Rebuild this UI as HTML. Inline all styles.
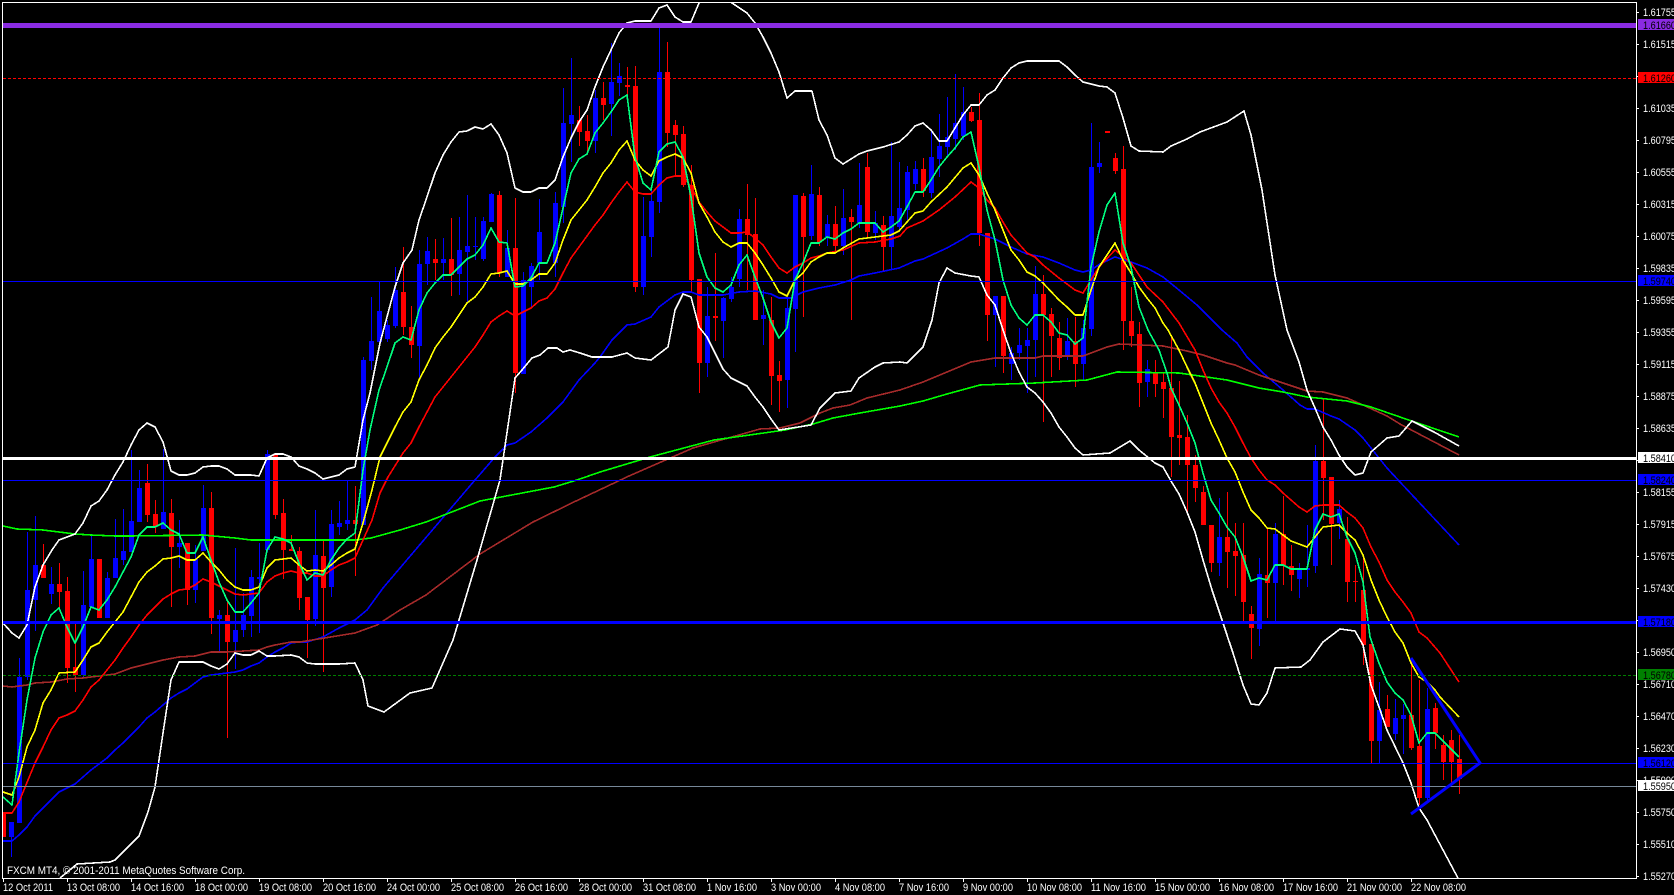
<!DOCTYPE html>
<html lang="en"><head><meta charset="utf-8"><title>FXCM MT4 chart</title>
<style>
html,body{margin:0;padding:0;background:#000;width:1674px;height:895px;overflow:hidden}
svg{display:block}
text{font-family:"Liberation Sans",sans-serif;font-size:11px;fill:#fff}
.k text,text.k{fill:#000}
.m polyline{fill:none;stroke-width:1.6;shape-rendering:crispEdges;stroke-linejoin:round}
.c path{fill:none;shape-rendering:crispEdges}
</style></head><body>
<svg width="1674" height="895" viewBox="0 0 1674 895" xmlns="http://www.w3.org/2000/svg">
<defs><clipPath id="p"><rect x="3" y="3" width="1633" height="875"/></clipPath></defs>
<rect width="1674" height="895" fill="#000"/>
<g clip-path="url(#p)">
<g class="c">
<path stroke="#0000ff" stroke-width="1" d="M11.5 822V857M19.5 658V823M27.5 532V680M35.5 516V631M51.5 567V604M83.5 571V677M91.5 535V607M107.5 572V618M115.5 519V578M123.5 509V565M131.5 450V552M139.5 470V522M163.5 449V529M179.5 520V568M195.5 545V603M203.5 485V551M219.5 610V651M235.5 548V669M243.5 593V637M251.5 570V637M259.5 543V633M267.5 450V552M315.5 510V626M331.5 510V597M339.5 501V535M347.5 481V530M363.5 357V525M371.5 297V370M379.5 282V342M387.5 320V342M395.5 267V328M419.5 250V380M427.5 237V285M443.5 238V280M459.5 217V295M467.5 195V303M475.5 217V260M483.5 217V261M491.5 193V222M507.5 230V277M523.5 272V374M531.5 263V307M539.5 199V280M555.5 192V277M563.5 88V223M571.5 58V162M595.5 90V153M611.5 43V136M619.5 63V96M643.5 197V295M651.5 190V257M659.5 28V213M707.5 287V377M723.5 297V358M731.5 277V302M739.5 209V287M763.5 290V345M787.5 297V408M795.5 195V352M811.5 165V240M827.5 215V246M843.5 189V255M859.5 163V228M875.5 211V240M891.5 142V270M899.5 162V230M907.5 166V220M915.5 161V190M931.5 130V198M939.5 114V177M947.5 97V155M955.5 74V150M963.5 87V140M995.5 296V367M1011.5 347V380M1019.5 328V360M1027.5 328V393M1035.5 266V377M1067.5 318V360M1083.5 320V380M1091.5 123V336M1099.5 142V173M1147.5 360V397M1219.5 498V576M1259.5 558V646M1275.5 523V622M1299.5 563V598M1307.5 525V587M1315.5 445V573M1339.5 500V539M1379.5 682V763M1395.5 699V740M1403.5 704V754M1427.5 688V800"/>
<path stroke="#0000ff" stroke-width="5" d="M11.5 822V837M19.5 677V823M27.5 590V677M35.5 565V600M51.5 584V594M83.5 605V675M91.5 559V607M107.5 578V618M115.5 558V578M123.5 551V560M131.5 521V552M139.5 488V522M163.5 512V529M179.5 543V547M195.5 559V590M203.5 508V551M219.5 615V619M235.5 630V642M243.5 615V630M251.5 577V616M259.5 577V579M267.5 454V550M315.5 555V619M331.5 524V587M339.5 523V527M347.5 520V524M363.5 360V525M371.5 341V361M379.5 311V342M387.5 325V339M395.5 290V326M419.5 264V346M427.5 251V264M443.5 259V263M459.5 250V274M467.5 246V252M475.5 246V247M483.5 221V259M491.5 194V222M507.5 248V277M523.5 280V374M531.5 266V287M539.5 232V263M555.5 203V263M563.5 123V207M571.5 115V124M595.5 98V141M611.5 82V104M619.5 76V83M643.5 236V287M651.5 201V237M659.5 72V202M707.5 316V363M723.5 298V321M731.5 287V299M739.5 219V279M763.5 315V319M787.5 308V380M795.5 195V309M811.5 194V236M827.5 224V237M843.5 218V246M859.5 205V223M875.5 223V233M891.5 216V247M899.5 208V227M907.5 172V210M915.5 169V184M931.5 157V193M939.5 146V159M947.5 137V147M955.5 123V139M963.5 112V136M995.5 296V315M1011.5 353V364M1019.5 345V353M1027.5 340V346M1035.5 294V340M1067.5 341V356M1083.5 328V364M1091.5 167V329M1099.5 163V167M1147.5 369V382M1219.5 537V563M1259.5 574V629M1275.5 534V583M1299.5 569V579M1307.5 568V570M1315.5 461V566M1339.5 509V523M1379.5 710V741M1395.5 718V734M1403.5 715V719M1427.5 709V798"/>
<path stroke="#ff0000" stroke-width="1" d="M43.5 544V578M59.5 563V609M67.5 577V683M75.5 624V692M99.5 559V618M147.5 464V522M155.5 500V533M171.5 499V607M187.5 543V605M211.5 492V634M227.5 600V738M275.5 455V519M283.5 499V579M291.5 535V551M299.5 547V610M307.5 597V658M323.5 540V672M355.5 486V576M403.5 247V335M411.5 306V358M435.5 239V280M451.5 218V296M499.5 191V277M515.5 198V393M579.5 106V146M587.5 115V152M603.5 82V120M627.5 67V95M635.5 66V292M667.5 42V147M675.5 120V175M683.5 126V187M691.5 165V293M699.5 279V393M715.5 253V341M747.5 184V290M755.5 198V320M771.5 297V405M779.5 361V412M803.5 193V317M819.5 187V246M835.5 206V253M851.5 209V320M867.5 153V237M883.5 216V272M923.5 158V197M971.5 107V122M979.5 93V246M987.5 233V341M1003.5 296V373M1043.5 275V422M1051.5 308V377M1059.5 322V370M1075.5 317V387M1115.5 153V174M1123.5 146V350M1131.5 287V347M1139.5 322V407M1155.5 360V397M1163.5 373V418M1171.5 337V477M1179.5 381V465M1187.5 415V515M1195.5 455V502M1203.5 486V525M1211.5 525V572M1227.5 492V588M1235.5 523V596M1243.5 523V623M1251.5 606V659M1267.5 529V618M1283.5 496V585M1291.5 545V591M1323.5 398V520M1331.5 477V565M1347.5 517V602M1355.5 565V602M1363.5 558V665M1371.5 644V763M1387.5 695V727M1411.5 660V750M1419.5 680V805M1435.5 703V749M1443.5 735V780M1451.5 730V785M1459.5 735V794"/>
<path stroke="#ff0000" stroke-width="5" d="M3.5 813V837M43.5 565V578M59.5 584V592M67.5 591V668M75.5 667V675M99.5 559V618M147.5 483V515M155.5 514V526M171.5 513V547M187.5 543V590M211.5 508V618M227.5 615V642M275.5 455V515M283.5 513V550M291.5 549V551M299.5 551V598M307.5 597V620M323.5 556V588M355.5 520V524M403.5 292V327M411.5 327V345M435.5 259V263M451.5 259V275M499.5 195V273M515.5 248V373M579.5 120V132M587.5 131V141M603.5 98V105M627.5 85V87M635.5 86V287M667.5 72V133M675.5 125V135M683.5 134V185M691.5 185V280M699.5 279V363M715.5 316V318M747.5 219V235M755.5 234V320M771.5 320V376M779.5 375V381M803.5 196V237M819.5 195V242M835.5 224V246M851.5 217V222M867.5 167V232M883.5 225V247M923.5 169V191M971.5 112V121M979.5 120V233M987.5 233V315M1003.5 296V356M1043.5 294V315M1051.5 314V336M1059.5 338V358M1075.5 341V364M1107.5 131V133M1115.5 158V171M1123.5 169V321M1131.5 321V336M1139.5 334V383M1155.5 373V384M1163.5 382V389M1171.5 388V437M1179.5 435V438M1187.5 437V465M1195.5 465V488M1203.5 492V525M1211.5 525V563M1227.5 537V552M1235.5 551V556M1243.5 555V602M1251.5 614V628M1267.5 575V583M1283.5 534V565M1291.5 566V575M1323.5 461V478M1331.5 477V524M1347.5 539V582M1355.5 581V582M1363.5 590V645M1371.5 644V741M1387.5 709V727M1411.5 715V748M1419.5 746V798M1435.5 708V733M1443.5 745V762M1451.5 740V762M1459.5 759V779"/>
</g>
<g class="m">
<polyline stroke="#0000ff" points="3,841 12,841 19,835 27,827 35,816 43,808 51,800 59,792 75,784 83,777 91,770 99,764 107,758 115,750 123,743 131,735 139,727 147,718 155,712 163,705 171,698 179,693 187,689 195,683 203,677 211,675 219,674 235,672 243,670 251,666 259,663 267,657 275,652 283,648 291,643 299,642 307,642 323,637 339,628 355,620 367,610 383,588 400,568 475,480 482,472 495,457 507,445 515,443 531,432 547,418 563,402 579,380 595,363 600,357 612,340 627,325 635,324 651,317 659,307 675,295 683,292 691,292 699,295 723,295 739,292 755,291 771,294 779,298 791,298 803,292 819,288 835,285 851,280 859,276 875,273 899,268 915,261 923,259 947,248 963,239 971,234 979,234 995,239 1011,247 1027,254 1043,257 1059,263 1075,270 1083,272 1091,270 1100,264 1115,257 1131,262 1147,268 1163,277 1179,290 1197,305 1222,330 1237,343 1247,357 1263,373 1283,390 1300,405 1307,409 1315,409 1331,416 1339,419 1355,430 1363,438 1371,448 1379,458 1387,468 1400,482 1459,545"/>
<polyline stroke="#a52a2a" points="3,686 12,687 19,686 27,685 35,683 51,682 67,679 83,678 99,676 115,674 131,668 147,664 163,660 179,657 195,656 211,652 227,652 243,651 259,650 267,647 275,645 291,642 300,642 355,633 377,625 400,610 426,595 480,554 533,522 576,501 629,476 693,448 760,429 780,428 800,423 820,413 833,408 850,405 867,398 900,390 923,382 947,372 971,362 995,358 1035,358 1043,356 1083,356 1091,353 1107,347 1119,344 1163,346 1187,351 1203,355 1227,363 1235,365 1259,375 1283,383 1307,391 1323,392 1347,398 1363,405 1387,416 1400,424 1459,455"/>
<polyline stroke="#00ff00" points="3,526 17,529 43,530 59,532 75,534 91,535 115,536 131,536 203,535 235,538 251,540 299,540 355,540 371,538 400,530 426,522 480,501 554,487 577,480 600,472 650,457 714,440 785,430 813,424 833,418 860,413 900,406 923,401 947,394 980,385 1035,383 1087,380 1117,372 1179,373 1227,380 1259,388 1283,392 1307,397 1347,401 1371,407 1400,417 1459,437"/>
<polyline stroke="#ffffff" points="3,623 12,633 19,638 27,625 35,587 43,565 52,550 59,540 67,537 75,534 83,523 91,506 99,501 107,490 115,475 123,462 131,445 139,430 147,423 155,427 163,442 168,460 171,471 179,475 187,475 195,473 203,467 211,466 219,466 227,469 235,475 251,475 259,476 267,458 275,454 283,454 291,457 299,466 307,469 315,473 323,479 331,477 339,475 347,469 355,467 363,420 370,393 380,343 395,287 403,263 412,250 419,220 427,197 435,173 443,155 451,142 459,132 467,131 475,127 483,129 491,124 499,135 507,153 515,188 523,192 531,192 539,188 547,188 555,180 563,157 571,138 579,122 587,110 595,87 603,67 611,50 619,33 627,23 635,21 651,21 659,8 667,5 675,17 683,22 691,22 699,3 710,-8 722,-8 732,3 747,13 755,23 763,37 771,53 779,72 787,98 795,91 812,91 819,120 827,135 835,158 843,164 851,159 859,154 867,151 883,147 899,142 907,135 915,126 923,123 931,130 939,141 947,141 955,128 963,115 971,105 979,105 987,95 995,90 1003,78 1011,68 1019,63 1027,61 1059,61 1067,67 1075,75 1083,82 1099,86 1107,87 1115,93 1123,118 1131,146 1139,151 1163,152 1171,146 1187,139 1200,132 1227,122 1244,111 1251,135 1262,190 1275,275 1287,330 1299,362 1307,390 1315,408 1323,427 1331,440 1339,455 1347,467 1355,475 1363,473 1371,452 1379,445 1387,438 1399,436 1412,421 1434,432 1459,446"/>
<polyline stroke="#ffffff" points="60,878 77,864 110,862 115,860 139,836 148,812 155,787 163,733 171,680 179,662 203,662 211,666 219,669 227,664 235,653 243,655 251,655 259,651 267,656 275,656 291,655 299,657 307,663 315,664 339,664 355,663 363,680 368,706 384,712 410,693 432,688 453,640 477,560 500,480 515,378 522,370 532,358 540,355 548,348 557,348 563,352 570,350 580,353 592,357 612,357 627,353 635,358 651,360 668,347 675,310 683,294 691,297 699,327 707,337 715,353 723,369 731,378 747,386 755,397 763,407 771,419 779,430 811,425 820,408 835,393 851,391 859,378 875,367 883,363 900,362 907,363 923,347 932,320 939,283 947,268 955,273 971,276 979,277 987,295 995,305 1003,330 1011,353 1019,372 1027,387 1035,393 1043,402 1051,413 1059,427 1067,437 1075,448 1083,455 1110,453 1130,441 1139,450 1155,463 1163,467 1171,481 1179,494 1187,512 1195,532 1203,560 1212,590 1223,623 1233,653 1243,685 1251,704 1259,705 1267,693 1275,668 1301,667 1310,660 1323,642 1340,629 1355,631 1363,645 1371,685 1379,707 1387,730 1403,763 1411,783 1419,808 1427,820 1459,880"/>
<polyline stroke="#ff0000" points="3,813 12,813 19,802 28,780 35,763 43,747 51,730 59,718 67,715 75,711 83,700 91,687 99,680 107,670 115,660 123,648 131,637 139,625 147,615 155,607 163,599 171,594 179,590 187,589 195,585 203,579 211,582 219,586 227,590 235,594 243,595 251,594 259,593 267,582 275,576 283,573 291,571 299,573 307,573 315,576 323,576 331,570 339,565 347,562 355,558 363,540 372,520 380,493 388,477 403,453 411,443 419,427 427,412 435,397 443,387 451,377 459,367 467,357 475,347 483,335 491,322 499,316 507,311 515,316 523,312 531,308 539,301 547,298 555,289 563,273 571,258 579,247 587,236 595,225 603,215 611,203 619,192 627,182 635,192 643,194 651,194 659,185 667,178 675,176 683,176 691,187 699,202 707,212 715,221 723,227 731,233 739,233 747,232 755,238 763,245 771,257 779,268 787,273 795,267 803,263 811,258 819,256 827,253 843,250 859,243 875,242 891,239 900,236 907,228 923,221 939,210 955,197 971,182 979,188 987,200 995,208 1003,222 1011,235 1027,253 1035,257 1043,265 1059,278 1075,290 1083,293 1091,280 1099,267 1115,250 1131,263 1147,287 1163,302 1179,323 1195,350 1203,370 1211,388 1219,402 1227,413 1235,427 1243,443 1251,458 1259,470 1267,480 1275,485 1283,493 1291,500 1299,507 1307,512 1315,506 1323,505 1339,505 1347,512 1355,518 1363,528 1371,547 1379,562 1387,580 1395,592 1403,602 1411,613 1419,632 1427,638 1440,653 1459,682"/>
<polyline stroke="#ffff00" points="3,792 12,795 19,777 27,747 35,730 43,703 51,690 59,673 75,672 83,660 91,647 99,643 107,632 115,622 123,612 131,597 139,582 147,572 155,566 163,559 171,558 179,556 187,560 195,560 203,553 211,562 219,570 227,580 235,587 243,590 251,590 259,587 267,568 275,560 283,559 291,558 299,565 307,571 315,570 323,571 331,565 339,558 347,553 355,549 363,523 372,490 380,457 387,443 395,427 403,412 411,402 419,380 427,365 435,348 443,337 451,327 459,315 467,303 475,297 483,287 491,274 499,273 507,271 515,284 523,284 531,280 539,274 547,274 555,263 563,240 571,220 579,210 587,200 595,187 603,173 611,163 619,150 627,141 635,160 643,170 651,176 659,161 667,157 675,154 683,158 691,173 699,203 707,217 715,232 723,242 731,247 739,243 747,243 755,253 763,265 771,278 779,292 787,296 795,280 803,273 811,262 819,257 827,253 835,253 843,248 859,239 875,237 891,235 899,231 907,222 915,213 923,211 931,202 947,187 963,168 971,163 979,175 987,193 995,210 1003,230 1011,250 1019,260 1027,272 1035,276 1043,283 1059,300 1067,307 1075,315 1083,315 1091,290 1099,267 1115,243 1123,260 1131,273 1139,287 1147,298 1155,308 1163,323 1168,330 1179,350 1187,367 1195,383 1203,403 1211,423 1219,440 1227,458 1235,472 1243,492 1251,510 1259,518 1267,528 1275,529 1283,535 1291,541 1299,544 1307,547 1315,537 1323,527 1339,525 1347,533 1355,540 1363,555 1371,580 1379,600 1387,617 1395,632 1403,643 1411,663 1419,677 1427,682 1435,690 1440,697 1459,717"/>
<polyline stroke="#00ff7f" points="3,797 12,805 19,753 27,700 35,658 43,632 51,615 59,608 67,627 75,643 83,627 91,607 99,610 107,600 115,587 123,572 131,557 139,535 147,527 155,527 163,523 171,530 179,534 187,553 195,553 203,537 211,560 219,582 227,600 235,612 243,612 251,603 259,593 267,550 275,537 283,539 291,543 299,563 307,580 315,573 323,575 331,560 339,548 347,539 355,533 363,470 370,430 379,390 387,367 395,343 403,337 411,340 419,310 427,293 435,283 443,275 451,275 459,267 467,259 475,255 483,245 491,228 499,242 507,243 515,287 523,286 531,278 539,263 547,263 555,243 563,208 571,173 579,159 587,154 595,133 603,123 611,112 619,100 627,95 635,157 643,183 651,190 659,152 667,144 675,142 683,157 691,197 699,253 707,277 715,288 723,292 731,285 739,265 747,255 755,277 763,298 771,322 779,338 787,328 795,280 803,263 811,243 819,243 827,237 835,239 843,233 851,229 859,223 875,223 883,232 891,227 899,221 907,207 915,192 923,192 931,180 939,167 947,157 955,148 963,137 971,132 979,167 987,210 995,240 1003,280 1011,305 1019,318 1027,325 1035,315 1043,315 1051,322 1059,333 1067,335 1075,344 1083,338 1091,267 1099,232 1107,205 1115,193 1123,243 1131,267 1139,307 1148,330 1159,350 1167,373 1171,388 1179,405 1187,423 1195,443 1203,473 1211,500 1219,513 1227,527 1235,537 1243,557 1251,581 1259,578 1267,580 1275,565 1283,565 1291,569 1307,569 1315,530 1323,514 1331,517 1339,514 1347,537 1355,553 1363,582 1370,637 1379,663 1387,682 1395,693 1403,700 1411,715 1419,743 1427,733 1435,733 1440,738 1459,757"/>
</g>
<g shape-rendering="crispEdges">
<rect x="3" y="23" width="1633" height="5" fill="#8a2be2"/>
<line x1="3" y1="78.5" x2="1636" y2="78.5" stroke="#ff0000" stroke-dasharray="3 2"/>
<rect x="3" y="281" width="1633" height="1" fill="#0000ff"/>
<rect x="3" y="457" width="1633" height="3" fill="#ffffff"/>
<rect x="3" y="480" width="1633" height="1" fill="#0000ff"/>
<rect x="3" y="621" width="1633" height="3" fill="#0000ff"/>
<line x1="3" y1="675.5" x2="1636" y2="675.5" stroke="#008000" stroke-dasharray="3 2"/>
<rect x="3" y="763" width="1633" height="1" fill="#0000ff"/>
<rect x="3" y="786" width="1633" height="1" fill="#778899"/>
</g>
<polyline points="1411,658 1480,763 1411,814" fill="none" stroke="#0000ff" stroke-width="3"/>
<text x="7" y="874" textLength="238" lengthAdjust="spacingAndGlyphs">FXCM MT4, © 2001-2011 MetaQuotes Software Corp.</text>
</g>
<g fill="#fff" shape-rendering="crispEdges">
<rect x="2" y="2" width="1635" height="1"/><rect x="2" y="2" width="1" height="877"/><rect x="1636" y="2" width="1" height="877"/><rect x="2" y="878" width="1635" height="1"/>
<path stroke="#fff" stroke-width="1" d="M1637 12.5h2M1637 44.5h2M1637 76.5h2M1637 108.5h2M1637 140.5h2M1637 172.5h2M1637 204.5h2M1637 236.5h2M1637 268.5h2M1637 300.5h2M1637 332.5h2M1637 364.5h2M1637 396.5h2M1637 428.5h2M1637 460.5h2M1637 492.5h2M1637 524.5h2M1637 556.5h2M1637 588.5h2M1637 620.5h2M1637 652.5h2M1637 684.5h2M1637 716.5h2M1637 748.5h2M1637 780.5h2M1637 812.5h2M1637 844.5h2M1637 876.5h2M3.5 879v3M67.5 879v3M131.5 879v3M195.5 879v3M259.5 879v3M323.5 879v3M387.5 879v3M451.5 879v3M515.5 879v3M579.5 879v3M643.5 879v3M707.5 879v3M771.5 879v3M835.5 879v3M899.5 879v3M963.5 879v3M1027.5 879v3M1091.5 879v3M1155.5 879v3M1219.5 879v3M1283.5 879v3M1347.5 879v3M1411.5 879v3"/>
</g>
<g>
<text x="1643" y="16" textLength="33" lengthAdjust="spacingAndGlyphs">1.61755</text>
<text x="1643" y="48" textLength="33" lengthAdjust="spacingAndGlyphs">1.61515</text>
<text x="1643" y="112" textLength="33" lengthAdjust="spacingAndGlyphs">1.61035</text>
<text x="1643" y="144" textLength="33" lengthAdjust="spacingAndGlyphs">1.60795</text>
<text x="1643" y="176" textLength="33" lengthAdjust="spacingAndGlyphs">1.60555</text>
<text x="1643" y="208" textLength="33" lengthAdjust="spacingAndGlyphs">1.60315</text>
<text x="1643" y="240" textLength="33" lengthAdjust="spacingAndGlyphs">1.60075</text>
<text x="1643" y="272" textLength="33" lengthAdjust="spacingAndGlyphs">1.59835</text>
<text x="1643" y="304" textLength="33" lengthAdjust="spacingAndGlyphs">1.59595</text>
<text x="1643" y="336" textLength="33" lengthAdjust="spacingAndGlyphs">1.59355</text>
<text x="1643" y="368" textLength="33" lengthAdjust="spacingAndGlyphs">1.59115</text>
<text x="1643" y="400" textLength="33" lengthAdjust="spacingAndGlyphs">1.58875</text>
<text x="1643" y="432" textLength="33" lengthAdjust="spacingAndGlyphs">1.58635</text>
<text x="1643" y="496" textLength="33" lengthAdjust="spacingAndGlyphs">1.58155</text>
<text x="1643" y="528" textLength="33" lengthAdjust="spacingAndGlyphs">1.57915</text>
<text x="1643" y="560" textLength="33" lengthAdjust="spacingAndGlyphs">1.57675</text>
<text x="1643" y="592" textLength="33" lengthAdjust="spacingAndGlyphs">1.57430</text>
<text x="1643" y="656" textLength="33" lengthAdjust="spacingAndGlyphs">1.56950</text>
<text x="1643" y="688" textLength="33" lengthAdjust="spacingAndGlyphs">1.56710</text>
<text x="1643" y="720" textLength="33" lengthAdjust="spacingAndGlyphs">1.56470</text>
<text x="1643" y="752" textLength="33" lengthAdjust="spacingAndGlyphs">1.56230</text>
<text x="1643" y="784" textLength="33" lengthAdjust="spacingAndGlyphs">1.55990</text>
<text x="1643" y="816" textLength="33" lengthAdjust="spacingAndGlyphs">1.55750</text>
<text x="1643" y="848" textLength="33" lengthAdjust="spacingAndGlyphs">1.55510</text>
<text x="1643" y="880" textLength="33" lengthAdjust="spacingAndGlyphs">1.55270</text>
</g>
<g shape-rendering="crispEdges">
<rect x="1638" y="19" width="36" height="11" fill="#8a2be2"/>
<rect x="1638" y="72" width="36" height="11" fill="#ff0000"/>
<rect x="1638" y="275" width="36" height="11" fill="#0000ff"/>
<rect x="1638" y="452" width="36" height="11" fill="#ffffff"/>
<rect x="1638" y="474" width="36" height="11" fill="#0000ff"/>
<rect x="1638" y="616" width="36" height="11" fill="#0000ff"/>
<rect x="1638" y="669" width="36" height="11" fill="#008000"/>
<rect x="1638" y="757" width="36" height="11" fill="#0000ff"/>
<rect x="1638" y="780" width="36" height="11" fill="#ffffff"/>
</g>
<g class="k">
<text x="1643" y="29" textLength="33" lengthAdjust="spacingAndGlyphs">1.61660</text>
<text x="1643" y="82" textLength="33" lengthAdjust="spacingAndGlyphs">1.61260</text>
<text x="1643" y="285" textLength="33" lengthAdjust="spacingAndGlyphs">1.59740</text>
<text x="1643" y="462" textLength="33" lengthAdjust="spacingAndGlyphs">1.58410</text>
<text x="1643" y="484" textLength="33" lengthAdjust="spacingAndGlyphs">1.58240</text>
<text x="1643" y="626" textLength="33" lengthAdjust="spacingAndGlyphs">1.57180</text>
<text x="1643" y="679" textLength="33" lengthAdjust="spacingAndGlyphs">1.56780</text>
<text x="1643" y="767" textLength="33" lengthAdjust="spacingAndGlyphs">1.56120</text>
<text x="1643" y="790" textLength="33" lengthAdjust="spacingAndGlyphs">1.55950</text>
</g>
<g>
<text x="3" y="891" textLength="50" lengthAdjust="spacingAndGlyphs">12 Oct 2011</text>
<text x="67" y="891" textLength="53" lengthAdjust="spacingAndGlyphs">13 Oct 08:00</text>
<text x="131" y="891" textLength="53" lengthAdjust="spacingAndGlyphs">14 Oct 16:00</text>
<text x="195" y="891" textLength="53" lengthAdjust="spacingAndGlyphs">18 Oct 00:00</text>
<text x="259" y="891" textLength="53" lengthAdjust="spacingAndGlyphs">19 Oct 08:00</text>
<text x="323" y="891" textLength="53" lengthAdjust="spacingAndGlyphs">20 Oct 16:00</text>
<text x="387" y="891" textLength="53" lengthAdjust="spacingAndGlyphs">24 Oct 00:00</text>
<text x="451" y="891" textLength="53" lengthAdjust="spacingAndGlyphs">25 Oct 08:00</text>
<text x="515" y="891" textLength="53" lengthAdjust="spacingAndGlyphs">26 Oct 16:00</text>
<text x="579" y="891" textLength="53" lengthAdjust="spacingAndGlyphs">28 Oct 00:00</text>
<text x="643" y="891" textLength="53" lengthAdjust="spacingAndGlyphs">31 Oct 08:00</text>
<text x="707" y="891" textLength="50" lengthAdjust="spacingAndGlyphs">1 Nov 16:00</text>
<text x="771" y="891" textLength="50" lengthAdjust="spacingAndGlyphs">3 Nov 00:00</text>
<text x="835" y="891" textLength="50" lengthAdjust="spacingAndGlyphs">4 Nov 08:00</text>
<text x="899" y="891" textLength="50" lengthAdjust="spacingAndGlyphs">7 Nov 16:00</text>
<text x="963" y="891" textLength="50" lengthAdjust="spacingAndGlyphs">9 Nov 00:00</text>
<text x="1027" y="891" textLength="55" lengthAdjust="spacingAndGlyphs">10 Nov 08:00</text>
<text x="1091" y="891" textLength="55" lengthAdjust="spacingAndGlyphs">11 Nov 16:00</text>
<text x="1155" y="891" textLength="55" lengthAdjust="spacingAndGlyphs">15 Nov 00:00</text>
<text x="1219" y="891" textLength="55" lengthAdjust="spacingAndGlyphs">16 Nov 08:00</text>
<text x="1283" y="891" textLength="55" lengthAdjust="spacingAndGlyphs">17 Nov 16:00</text>
<text x="1347" y="891" textLength="55" lengthAdjust="spacingAndGlyphs">21 Nov 00:00</text>
<text x="1411" y="891" textLength="55" lengthAdjust="spacingAndGlyphs">22 Nov 08:00</text>
</g>
</svg>
</body></html>
